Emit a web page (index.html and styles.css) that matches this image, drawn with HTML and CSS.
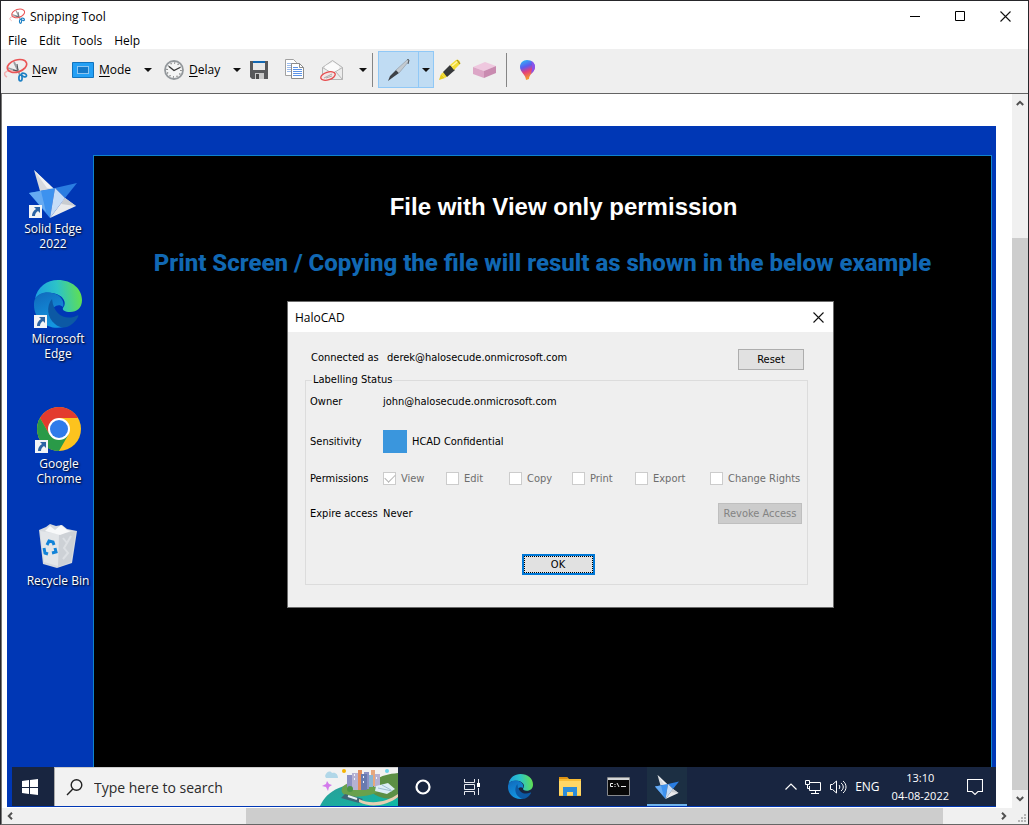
FILE: index.html
```html
<!DOCTYPE html>
<html lang="en">
<head>
  <meta charset="UTF-8">
  <meta name="viewport" content="width=device-width, initial-scale=1.0">
  <title>Snipping Tool</title>
  <link rel="stylesheet" href="styles.css">
</head>
<body>
  <!-- shared icons -->
  <svg class="defs" aria-hidden="true">
    <defs>
      <linearGradient id="edgeTop" x1="0" y1="0.6" x2="1" y2="0.5">
        <stop offset="0" stop-color="#1b9de2"/><stop offset="0.5" stop-color="#2cc3c8"/><stop offset="1" stop-color="#62e04e"/>
      </linearGradient>
      <linearGradient id="edgeLeft" x1="0" y1="0" x2="0.4" y2="1">
        <stop offset="0" stop-color="#1068bb"/><stop offset="1" stop-color="#1496e0"/>
      </linearGradient>
      <linearGradient id="balloon" x1="0" y1="0" x2="0.3" y2="1">
        <stop offset="0" stop-color="#26c6f5"/><stop offset="0.4" stop-color="#5a5cf0"/><stop offset="0.65" stop-color="#e43f7c"/><stop offset="1" stop-color="#f59a2c"/>
      </linearGradient>
      <linearGradient id="sea" x1="0" y1="0" x2="1" y2="1">
        <stop offset="0" stop-color="#2e9a96"/><stop offset="1" stop-color="#0fb9a5"/>
      </linearGradient>
    </defs>
    <symbol id="snip" viewBox="0 0 24 24">
      <path d="M3 19C-2 16 1 12 9 13s10 0 11-3" fill="none" stroke="#f3b0b0" stroke-width="1.5"/>
      <path d="M10 4l6 13M4 10l12 4" stroke="#9a9ea3" stroke-width="1.800"/>
      <path d="M13 6l1 6M9 12l5 1" stroke="#4b4f54" stroke-width="1"/>
      <ellipse cx="13" cy="8" rx="10" ry="6" transform="rotate(-18 13 8)" fill="none" stroke="#ea5455" stroke-width="1.600"/>
      <ellipse cx="16.500" cy="20" rx="1.600" ry="3" fill="none" stroke="#1b7fc4" stroke-width="1.700"/>
      <ellipse cx="20" cy="17" rx="2.600" ry="1.600" transform="rotate(25 20 17)" fill="none" stroke="#1b7fc4" stroke-width="1.700"/>
    </symbol>
    <symbol id="solidedge" viewBox="0 0 48 48">
      <path d="M5 0L25 19 11 21z" fill="#d7dade"/>
      <path d="M5 0L25 19 18 18z" fill="#f1f2f3"/>
      <path d="M0 23L26 18 21 48z" fill="#3d92ef"/>
      <path d="M0 23L12 21 17 42z" fill="#65aaf2"/>
      <path d="M26 18L48 13 36 28z" fill="#2a7de1"/>
      <path d="M26 18L36 28 21 48z" fill="#c5dcf7"/>
      <path d="M36 28L47 36 21 48z" fill="#e9eaec"/>
      <path d="M36 28L47 36 32 34z" fill="#c9ccd0"/>
    </symbol>
    <symbol id="edge" viewBox="0 0 48 48">
      <path d="M1 19C3 7 13 0 24 0c14 0 24 9 24 20 0 8-5 12-12 12-5 0-8-2-7-4 5-6-1-14-11-15C10 12 4 14 1 19z" fill="url(#edgeTop)"/>
      <path d="M1 19C4 14 11 11 18 13c8 1 13 8 11 14-4-4-11-1-11 6 0 6 5 12 12 14C14 51 0 40 0 25c0-2 0-4 1-6z" fill="url(#edgeLeft)"/>
      <path d="M18 19c-6 7-5 19 3 25 3 3 8 4 12 3 5-2 9-6 11-10 1-2 0-2-2-1-9 4-22 1-24-17z" fill="#0c59a4"/>
    </symbol>
    <symbol id="shortcut" viewBox="0 0 13 13">
      <path d="M0 0h13v13H0z" fill="#f3f4f6"/>
      <path d="M5 2h6v6L9 6c-2 1-3 3-3 5H3c0-3 1-5 4-7z" fill="#2c64a4"/>
    </symbol>
    <symbol id="caret" viewBox="0 0 8 4">
      <path d="M0 0h8L4 4z" fill="#111"/>
    </symbol>
    <symbol id="close" viewBox="0 0 11 11">
      <path d="M0.500 0.500l10 10M10.500 0.500l-10 10" stroke="#111" stroke-width="1.100"/>
    </symbol>
    <symbol id="arrow" viewBox="0 0 8 6">
      <path d="M0.800 5L4 1.800 7.200 5" fill="none" stroke="#505050" stroke-width="2"/>
    </symbol>
  </svg>

  <div class="window">
    <header class="titlebar">
      <svg class="app-icon" aria-hidden="true"><use href="#snip"/></svg>
      <span class="title">Snipping Tool</span>
      <button class="win-btn" aria-label="Minimize"><svg width="11" height="11"><path d="M0 5.500h10" stroke="#000"/></svg></button>
      <button class="win-btn" aria-label="Maximize"><svg width="11" height="11"><path d="M0.500 0.500h9v9h-9z" fill="none" stroke="#000"/></svg></button>
      <button class="win-btn" aria-label="Close"><svg width="11" height="11"><use href="#close"/></svg></button>
    </header>

    <nav class="menu">
      <button>File</button>
      <button>Edit</button>
      <button>Tools</button>
      <button>Help</button>
    </nav>

    <div class="toolbar">
      <button class="tool new"><svg width="24" height="24"><use href="#snip"/></svg><span><u>N</u>ew</span></button>
      <button class="tool mode">
        <svg width="22" height="16"><path d="M0.500 0.500h21v15h-21z" fill="#24a0f5" stroke="#1173bd"/><path d="M5.500 4.500h11v7h-11z" fill="#1679c8" stroke="#fff" stroke-dasharray="1 1"/></svg>
        <span><u>M</u>ode</span>
      </button>
      <button class="drop" aria-label="Mode options"><svg width="8" height="4"><use href="#caret"/></svg></button>
      <button class="tool delay">
        <svg width="20" height="20" viewBox="0 0 20 20"><circle cx="10" cy="10" r="9" fill="#f4f5f5" stroke="#93989c" stroke-width="1.800"/><circle cx="10" cy="10" r="7" fill="none" stroke="#555" stroke-width="1.200" stroke-dasharray="1 2.660"/><path d="M5 6.500l5 4 6-3" fill="none" stroke="#333" stroke-width="1.300"/></svg>
        <span><u>D</u>elay</span>
      </button>
      <button class="drop" aria-label="Delay options"><svg width="8" height="4"><use href="#caret"/></svg></button>
      <button class="tool save" aria-label="Save snip">
        <svg width="18" height="18"><path d="M0 0h18v18H2l-2-2z" fill="#58595b"/><path d="M3 0h12v9H3z" fill="#e9e9e9"/><path d="M3 0h12v2H3z" fill="#1268b3"/><path d="M5 12h9v6H5z" fill="#c9c9c9"/><path d="M6 13h3v5H6z" fill="#4b4b4b"/></svg>
      </button>
      <button class="tool copy" aria-label="Copy">
        <svg width="19" height="21"><path d="M0.500 0.500h8l3 3v13h-11z" fill="#fff" stroke="#a1a1a1"/><path d="M2 4.500h6M2 6.500h6M2 8.500h6M2 10.500h6M2 12.500h6" stroke="#9cbcec"/><path d="M6.500 4.500h8l4 4v11h-12z" fill="#fff" stroke="#8b8b8b"/><path d="M14.500 4.500v4h4" fill="none" stroke="#8b8b8b"/><path d="M8 8.500h5M8 10.500h9M8 12.500h9M8 14.500h9M8 16.500h9" stroke="#5c93e6"/></svg>
      </button>
      <button class="tool mail" aria-label="Send snip">
        <svg width="24" height="22"><path d="M2.500 8.500L12.500 1.500l10 7v12h-20z" fill="#ececec" stroke="#b4b4b4"/><path d="M5 7l8-4 6 4v4l-6 4-8-4z" fill="#fbfbfb"/><path d="M2.500 8.500l10 6 10-6M2.500 20.500l7-8M22.500 20.500l-7-8" fill="none" stroke="#b4b4b4"/><ellipse cx="8" cy="17" rx="7.500" ry="3.800" transform="rotate(-18 8 17)" fill="#f4e4e4" stroke="#e64a4c" stroke-width="1.300"/><path d="M4 19l8-4M6 19l6-2" stroke="#aaa"/></svg>
      </button>
      <button class="drop" aria-label="Send options"><svg width="8" height="4"><use href="#caret"/></svg></button>
      <span class="sep"></span>
      <div class="pen-group">
        <button class="pen" aria-label="Pen">
          <svg width="22" height="22"><path d="M0 22l2-5 6-6 3 3-7 5z" fill="#3d4248"/><path d="M8 11L19 1l2 1-10 12z" fill="#c3cad0" stroke="#8d969e" stroke-width="0.600"/><path d="M19 0l2 1-1 4" fill="none" stroke="#50555a"/></svg>
        </button>
        <button class="pen-drop" aria-label="Pen options"><svg width="8" height="4"><use href="#caret"/></svg></button>
      </div>
      <button class="tool marker" aria-label="Highlighter">
        <svg width="22" height="22"><path d="M0 21l2-6 4 4z" fill="#e8cc18"/><path d="M2 15l4-3 4 4-4 3z" fill="#f0da32"/><path d="M4 13l7-7 5 5-8 7z" fill="#36383a"/><path d="M11 6l6-5c2-1 5 1 4 4l-6 6z" fill="#f2dc35"/><path d="M13 7l6-5" stroke="#fff4a0" stroke-width="1.500"/><path d="M18 1l3 4" stroke="#a28e16" stroke-width="1.200"/></svg>
      </button>
      <button class="tool eraser" aria-label="Eraser">
        <svg width="23" height="16"><path d="M0 5L12 0l11 4-12 5z" fill="#efc8df"/><path d="M0 5l11 4v7L0 12z" fill="#dca6c6"/><path d="M11 9l12-5v7l-12 5z" fill="#c98bb0"/></svg>
      </button>
      <span class="sep"></span>
      <button class="tool paint" aria-label="Edit with Paint 3D">
        <svg width="15" height="20"><path d="M7 0c5 0 8 3 8 7 0 5-6 7-6 12L6 20C6 15 0 12 0 7 0 3 3 0 7 0z" fill="url(#balloon)"/><path d="M11 1c3 1 4 4 4 6 0 3-2 5-4 7 1-4 2-8 0-13z" fill="#8a52ec"/></svg>
      </button>
    </div>

    <main class="workspace">
      <div class="canvas">
        <div class="capture">
          <div class="desktop">
            <a class="shortcut solid" href="#">
              <span class="pic"><svg width="48" height="48"><use href="#solidedge"/></svg><svg class="link"><use href="#shortcut"/></svg></span>
              Solid Edge<br>2022
            </a>
            <a class="shortcut msedge" href="#">
              <span class="pic"><svg width="48" height="48"><use href="#edge"/></svg><svg class="link"><use href="#shortcut"/></svg></span>
              Microsoft<br>Edge
            </a>
            <a class="shortcut chrome" href="#">
              <span class="pic">
                <svg width="44" height="44" viewBox="0 0 44 44"><circle cx="22" cy="22" r="22" fill="#fcc31e"/><path d="M3 11A22 22 0 0 1 41 11H22L12.500 27.500z" fill="#e33b2e"/><path d="M3 11A22 22 0 0 0 22 44L31.500 27.500 12.500 27.500z" fill="#2a9a48"/><circle cx="22" cy="22" r="11" fill="#fff"/><circle cx="22" cy="22" r="9" fill="#2f7bea"/></svg>
                <svg class="link"><use href="#shortcut"/></svg>
              </span>
              Google<br>Chrome
            </a>
            <a class="shortcut bin" href="#">
              <span class="pic">
                <svg width="38" height="44"><path d="M0 6l7-3 4-3 6 2 6-1 5 4 10 2-5 32-15 5-14-4z" fill="#d5d9de"/><path d="M1 7l19 3 17-3-5 31-13 4-14-4z" fill="#e3e6e9"/><path d="M20 10l17-3-5 31-13 5z" fill="#cdd1d6"/><path d="M6 7l5-5 5 4 6-5 6 5 4 1-11 4z" fill="#f8f9fa"/><path d="M24 14l4 5-3 5 4 5-5 6M32 12l-4 7" fill="none" stroke="#dde0e4" stroke-width="2"/><path d="M8 21l2-4 4 1 1 3M5 24l1 5 3 1M13 29l4-1-1-4" fill="none" stroke="#1283d8" stroke-width="3"/></svg>
              </span>
              Recycle Bin
            </a>
          </div>

          <section class="viewer">
            <h1>File with View only permission</h1>
            <h2>Print Screen / Copying the file will result as shown in the below example</h2>

            <div class="dialog" role="dialog" aria-label="HaloCAD">
              <div class="dialog-title">
                <span>HaloCAD</span>
                <button aria-label="Close dialog"><svg width="11" height="11"><use href="#close"/></svg></button>
              </div>
              <form class="dialog-body">
                <div class="account">
                  <span class="account-label">Connected as</span>
                  <span>derek@halosecude.onmicrosoft.com</span>
                  <button type="button" class="btn reset">Reset</button>
                </div>
                <fieldset>
                  <legend>Labelling Status</legend>
                  <div class="row owner"><span>Owner</span><span>john@halosecude.onmicrosoft.com</span></div>
                  <div class="row sensitivity"><span>Sensitivity</span><span class="level"><i class="swatch"></i>HCAD Confidential</span></div>
                  <div class="row permissions">
                    <span>Permissions</span>
                    <div class="checks">
                      <label><input type="checkbox" checked disabled>View</label>
                      <label><input type="checkbox" disabled>Edit</label>
                      <label><input type="checkbox" disabled>Copy</label>
                      <label><input type="checkbox" disabled>Print</label>
                      <label><input type="checkbox" disabled>Export</label>
                      <label><input type="checkbox" disabled>Change Rights</label>
                    </div>
                  </div>
                  <div class="row expire"><span>Expire access</span><span>Never</span><button type="button" class="btn revoke" disabled>Revoke Access</button></div>
                  <button type="button" class="ok"><span>OK</span></button>
                </fieldset>
              </form>
            </div>
          </section>

          <footer class="taskbar">
            <button class="start" aria-label="Start"><svg width="16" height="16"><path d="M0 2l7-1v7H0zM8 1l8-1v8H8zM0 9h7v6l-7-1zM8 9h8v7l-8-1z" fill="#fff"/></svg></button>
            <label class="search">
              <svg width="17" height="17" aria-hidden="true"><circle cx="10.500" cy="6" r="5.300" fill="none" stroke="#222" stroke-width="1.400"/><path d="M6.800 10L1 16" stroke="#222" stroke-width="1.400"/></svg>
              <input type="text" placeholder="Type here to search" aria-label="Type here to search">
              <svg class="city" width="78" height="38" viewBox="0 0 78 38" aria-hidden="true">
                <path d="M0 38C8 20 28 11 78 14v24z" fill="url(#sea)"/>
                <path d="M55 13c6-6 14-7 23-8v25c-12 2-22-1-26-6z" fill="#5c8f45"/>
                <path d="M22 20c-3 8 10 10 22 8 9-1 18-5 17-11-7-5-35-6-39 3z" fill="#69a14c"/>
                <path d="M27 7h5v14h-5zM44 4h5v17h-5z" fill="#8b90c4"/>
                <path d="M32 5h6v17h-6zM54 6h6v13h-6z" fill="#b5b1d2"/>
                <path d="M38 2h4v20h-4z" fill="#e58d5c"/><path d="M51 2h4v16h-4z" fill="#e6a77e"/>
                <path d="M41 6h6v16h-6z" fill="#687aaf"/><path d="M49 7h4v12h-4z" fill="#8bb6d3"/>
                <path d="M34 7h2M34 11h2M43 9h2M43 14h2M56 10h2" stroke="#eef3ff" stroke-width="2" stroke-dasharray="1 1"/>
                <circle cx="30" cy="21" r="3" fill="#4b9346"/><circle cx="62" cy="20" r="3" fill="#4b9346"/>
                <path d="M25 26l18 5-4 4-18-5z" fill="#3e6676"/><path d="M28 28l9 3" stroke="#e6f4f4" stroke-width="2"/>
                <path d="M39 31c12 6 28 3 39-5v3c-11 9-28 11-39 5z" fill="#e6cfb2"/>
                <path d="M56 18l12-3 7 6-8 5-12-3z" fill="#dcedf5"/><path d="M58 20l14 3M62 17l9 5" stroke="#9dbdd2"/>
                <path d="M5 8c1-4 5-6 7-3 4-1 6 2 6 5H6z" fill="#b1d7e8"/>
                <circle cx="24" cy="3" r="2" fill="#f6b400"/><circle cx="67" cy="3" r="2" fill="#6cd4ea"/>
                <path d="M7 13l2 3 3 1-3 2-1 4-2-4-4-1 4-2z" fill="#d37aec"/>
              </svg>
            </label>
            <div class="apps">
              <button aria-label="Cortana"><svg width="16" height="16"><circle cx="8" cy="8" r="6.500" fill="none" stroke="#fff" stroke-width="2.200"/></svg></button>
              <button aria-label="Task view"><svg width="17" height="16"><path d="M1.500 0v3.500h10V0M1.500 5.500h10v5h-10zM1.500 16v-3.500h10V16M15.500 0v4M15.500 9v7" fill="none" stroke="#e8eaf0"/><path d="M14 4h3v4h-3z" fill="#fff"/></svg></button>
              <button aria-label="Microsoft Edge"><svg width="25" height="25"><use href="#edge"/></svg></button>
              <button aria-label="File Explorer"><svg width="22" height="19"><path d="M0 0h8l2 2h12v17H0z" fill="#f8bd36"/><path d="M0 0h8l1 2H0z" fill="#df9212"/><path d="M0 4h22v14H0z" fill="#ffd765"/><path d="M4 19v-9h14v9h-4v-4H8v4z" fill="#2d8cd8"/></svg></button>
              <button aria-label="Command Prompt"><svg width="23" height="19"><path d="M0.500 0.500h22v18h-22z" fill="#080808" stroke="#87898c"/><path d="M1 1h21v2H1z" fill="#d4d6d8"/><path d="M6 6.500H3.500v3H6M8 7v1M8 9v1M10 6l2 4M14 9.500h5" fill="none" stroke="#eee"/></svg></button>
              <button class="active" aria-label="Solid Edge 2022"><svg width="24" height="24"><use href="#solidedge"/></svg></button>
            </div>
            <div class="tray">
              <svg width="12" height="7"><path d="M0.500 6.500L6 1l5.500 5.500" fill="none" stroke="#fff" stroke-width="1.200"/></svg>
              <svg width="17" height="14"><path d="M5 2.500h10.500v8H4.500V6M10.500 10.500v3M6 13.500h8" fill="none" stroke="#fff"/><path d="M0.500 0.500h4v4h-4zM2.500 4.500v4h2" fill="none" stroke="#fff"/></svg>
              <svg width="17" height="14"><path d="M0.500 4.500h2l4-3.500v12l-4-3.500h-2z" fill="none" stroke="#fff"/><path d="M9 5c1 1 1 3 0 4M11 3c3 2 3 6 0 8M13 1c4 3 4 9 0 12" fill="none" stroke="#fff"/></svg>
              <span class="lang">ENG</span>
              <span class="clock">13:10<br>04-08-2022</span>
              <svg width="16" height="16"><path d="M0.500 0.500h15v12H11l-3 3-3-3H0.500z" fill="none" stroke="#fff" stroke-width="1.100"/></svg>
            </div>
          </footer>
        </div>
      </div>

      <div class="scroll-y">
        <svg class="arr" width="8" height="6"><use href="#arrow"/></svg>
        <div class="gap"></div>
        <div class="thumb"></div>
        <svg class="arr down" width="8" height="6"><use href="#arrow"/></svg>
      </div>
      <div class="scroll-x">
        <svg class="arr left" width="8" height="6"><use href="#arrow"/></svg>
        <div class="before"></div>
        <div class="thumb"></div>
        <div class="after"></div>
        <svg class="arr right" width="8" height="6"><use href="#arrow"/></svg>
      </div>
      <div class="corner"><svg width="8" height="8"><path d="M6 0h2v2H6zM3 3h2v2H3zM6 3h2v2H6zM0 6h2v2H0zM3 6h2v2H3zM6 6h2v2H6z" fill="#b5b5b5"/></svg></div>
    </main>
  </div>
</body>
</html>
```
FILE: styles.css
```css
* {
  box-sizing: border-box;
}
body {
  margin: 0;
  font-family: "Open Sans", "Noto Sans", sans-serif;
  font-size: 12px;
  color: #000;
  background: #fff;
}
button, input {
  font: inherit;
  color: inherit;
  margin: 0;
}
button {
  padding: 0;
  border: none;
  background: transparent;
}
svg {
  display: block;
  flex: none;
}
.defs {
  position: absolute;
  width: 0;
  height: 0;
}
.window {
  display: flex;
  flex-direction: column;
  min-height: 100vh;
  border: 1px solid #26262a;
  border-bottom-color: #666;
}

/* Title bar and menu */
.titlebar {
  display: flex;
  align-items: center;
  height: 30px;
  padding-left: 8px;
}
.app-icon {
  width: 17px;
  height: 16px;
}
.title {
  flex: 1;
  margin-left: 4px;
}
.win-btn {
  display: flex;
  align-items: center;
  justify-content: center;
  width: 45px;
  height: 30px;
}
.menu {
  display: flex;
  gap: 12px;
  height: 18px;
  padding-left: 7px;
}
.menu button {
  line-height: 20px;
}

/* Toolbar */
.toolbar {
  display: flex;
  align-items: center;
  height: 45px;
  padding: 0 0 3px 3px;
  background: #efefef;
  border-bottom: 1px solid #636363;
}
.tool {
  display: flex;
  align-items: center;
  gap: 5px;
}
.tool u {
  text-underline-offset: 2px;
}
.new { width: 68px; }
.new svg { margin-right: -1px; }
.mode { width: 70px; }
.delay { width: 67px; margin-left: 11px; }
.save { width: 35px; margin-left: 8px; }
.copy { width: 35px; }
.mail { width: 37px; }
.marker { width: 34px; margin-left: 5px; }
.eraser { width: 33px; }
.paint { margin-left: 13px; }
.drop {
  display: flex;
  justify-content: center;
  width: 11px;
}
.sep {
  width: 1px;
  height: 34px;
  background: #858585;
}
.drop + .sep {
  margin: 0 5px 0 4px;
}
.pen-group {
  display: flex;
  height: 37px;
  background: #c0dcf3;
  border: 1px solid #90c8f6;
}
.pen-group button {
  display: flex;
  align-items: center;
  justify-content: center;
}
.pen {
  width: 39px;
}
.pen-drop {
  width: 15px;
  border-left: 1px solid #90c8f6;
}

/* Scrolled area */
.workspace {
  flex: 1;
  display: grid;
  grid-template-columns: 1fr 16px;
  grid-template-rows: 1fr 16px;
  border-left: 1px solid #777;
}
.canvas {
  display: flex;
  padding: 32px 16px 1px 5px;
}
.capture {
  flex: 1;
  display: grid;
  grid-template-columns: 86px 1fr;
  grid-template-rows: 1fr 40px;
  background: #0037b5;
}

/* Desktop */
.desktop {
  position: relative;
}
.shortcut {
  position: absolute;
  width: 80px;
  color: #fff;
  text-align: center;
  text-decoration: none;
  line-height: 15px;
  text-shadow: 1px 1px 2px #000;
}
.pic {
  display: flex;
  align-items: center;
  justify-content: center;
  position: relative;
  width: 48px;
  height: 48px;
  margin: 0 auto 3px;
}
.link {
  position: absolute;
  left: 0;
  bottom: 0;
  width: 13px;
  height: 13px;
}
.solid { left: 6px; top: 44px; }
.msedge { left: 11px; top: 154px; }
.chrome { left: 12px; top: 279px; }
.bin { left: 11px; top: 396px; }

.viewer {
  margin: 29px 4px 0 0;
  padding-top: 37px;
  background: #000;
  border: 1px solid #0f83cc;
  border-bottom: none;
}
h1, h2 {
  margin: 0;
  font-size: 24px;
  line-height: 28px;
  text-align: center;
}
h1 {
  padding-left: 42px;
  font-family: "Liberation Sans", Arial, sans-serif;
  color: #fff;
}
h2 {
  margin-top: 28px;
  font-family: Roboto, sans-serif;
  font-weight: 800;
  color: #1168b3;
}

/* HaloCAD dialog */
.dialog {
  width: 547px;
  margin: 24px 0 24px 193px;
  font-family: "DejaVu Sans Condensed", "DejaVu Sans", Tahoma, sans-serif;
  font-size: 11px;
  background: #efefef;
  border: 1px solid #6b6b6b;
}
.dialog-title {
  display: flex;
  align-items: center;
  justify-content: space-between;
  height: 30px;
  padding: 0 9px 0 7px;
  font-family: "Open Sans", "Noto Sans", sans-serif;
  font-size: 12px;
  background: #fff;
}
.dialog-body {
  padding: 17px 25px 22px 17px;
}
.account {
  display: flex;
  height: 24px;
  padding: 0 4px 0 6px;
  line-height: 17px;
}
.account-label {
  width: 76px;
}
.btn {
  height: 21px;
  background: #e1e1e1;
  border: 1px solid #adadad;
}
.reset {
  width: 66px;
  margin-left: auto;
}
fieldset {
  margin: 0;
  padding: 0 1px 8px 4px;
  border: 1px solid #dcdcdc;
}
legend {
  margin-left: 2px;
  padding: 0 1px;
  line-height: 14px;
}
.row {
  display: grid;
  grid-template-columns: 73px 1fr auto;
  align-items: center;
}
.row > span {
  white-space: nowrap;
}
.owner { height: 28px; }
.sensitivity { height: 52px; }
.permissions { height: 22px; }
.expire { height: 48px; }
.row .level {
  display: flex;
  align-items: center;
  gap: 5px;
}
.swatch {
  width: 24px;
  height: 23px;
  background: #3a96dd;
}
.checks {
  display: grid;
  grid-template-columns: repeat(4, 63px) 75px auto;
  grid-column: 2 / 4;
}
.checks label {
  display: flex;
  align-items: center;
  gap: 5px;
  color: #6d6d6d;
  white-space: nowrap;
}
.checks input {
  appearance: none;
  flex: none;
  display: grid;
  place-items: center;
  width: 13px;
  height: 13px;
  background: #fff;
  border: 1px solid #ccc;
}
.checks input:checked::before {
  content: "";
  width: 9px;
  height: 5px;
  margin-bottom: 3px;
  border: solid #b5b5b5;
  border-width: 0 0 1px 1px;
  transform: rotate(-45deg);
}
.revoke {
  width: 84px;
  margin-right: 4px;
  color: #838383;
  background: #ccc;
  border-color: #bfbfbf;
}
.ok {
  display: block;
  width: 73px;
  height: 21px;
  margin: 17px auto 1px;
  background: #e1e1e1;
  border: 2px solid #0078d7;
}
.ok span {
  display: block;
  height: 17px;
  line-height: 16px;
  border: 1px dotted #000;
}

/* Taskbar */
.taskbar {
  grid-column: 1 / 3;
  display: flex;
  margin-left: 5px;
  color: #fff;
  background: #182540;
  border-bottom: 1px solid #0037b5;
}
.start {
  display: flex;
  align-items: center;
  justify-content: center;
  width: 42px;
  padding-right: 6px;
}
.search {
  display: flex;
  align-items: center;
  width: 344px;
  padding-left: 11px;
  color: #2b2b2b;
  background: #f2f2f2;
  border-left: 1px solid #aaa;
  border-top: 1px solid #ccc;
}
.search input {
  flex: 1;
  min-width: 0;
  padding: 0 0 0 11px;
  font-size: 14px;
  background: transparent;
  border: none;
  outline: none;
}
.search input::placeholder {
  color: #2b2b2b;
}
.apps {
  display: flex;
}
.apps button {
  display: flex;
  align-items: center;
  justify-content: center;
  width: 49px;
  border: solid transparent;
  border-width: 2px 0;
}
.apps .active {
  width: 40px;
  margin-left: 4px;
  background: #1c2f43;
  border-bottom-color: #6fb3ec;
}
.tray {
  display: flex;
  align-items: center;
  gap: 8px;
  margin-left: auto;
  padding-right: 13px;
}
.tray .clock {
  margin: 0 10px 0 4px;
  font-size: 11px;
  line-height: 18px;
  text-align: center;
}

/* Scroll bars */
.scroll-y,
.scroll-x {
  display: flex;
  background: #f0f0f0;
}
.scroll-y {
  flex-direction: column;
}
.scroll-y .arr {
  margin: 6px 4px;
}
.scroll-x .arr {
  margin: 5px 4px;
}
.gap { flex: 126; }
.scroll-y .thumb { flex: 552; }
.before { flex: 228; }
.scroll-x .thumb { flex: 698; }
.after { flex: 53; }
.thumb {
  background: #cdcdcd;
}
.down { transform: rotate(180deg); }
.left { transform: rotate(-90deg); }
.right { transform: rotate(90deg); }
.corner {
  display: flex;
  align-items: flex-end;
  justify-content: flex-end;
  padding: 2px;
  background: #f0f0f0;
}
```
